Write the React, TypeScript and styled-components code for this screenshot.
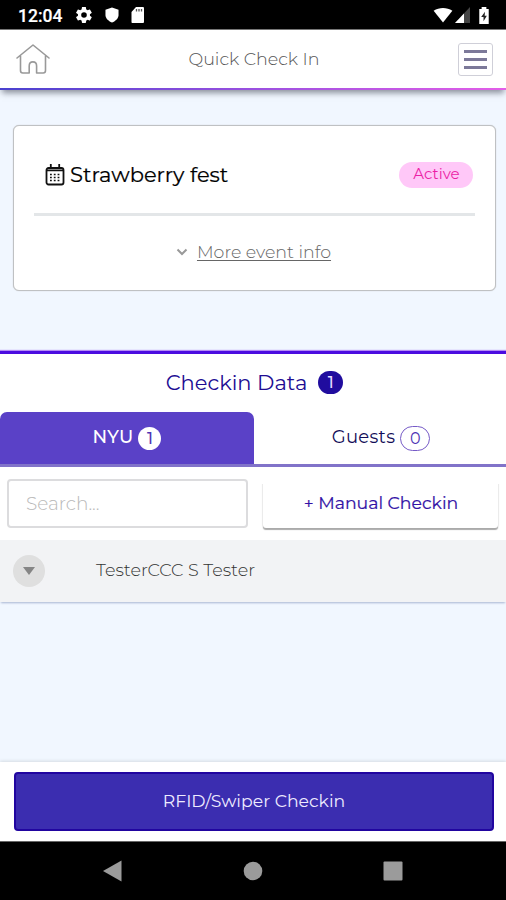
import React from "react";
import styled, { createGlobalStyle } from "styled-components";

const GlobalStyle = createGlobalStyle`
  *, *::before, *::after { box-sizing: border-box; }
  body { margin: 0; background: #f1f7ff; font-family: Montserrat, Inter, sans-serif; overflow: hidden; }
  button, input { font-family: inherit; margin: 0; }
`;

const Screen = styled.div`
  width: 506px;
  height: 900px;
  display: flex;
  flex-direction: column;
  background: #f1f7ff;
`;

const StatusBar = styled.div`
  height: 30px;
  flex: none;
  display: flex;
  align-items: center;
  padding: 1px 16px 0 18px;
  background: #000;
  border-bottom: 1px solid #777;
  color: #fff;
`;

const Clock = styled.span`
  width: 58px;
  padding-top: 1px;
  font: 500 17.5px/28px Roboto, sans-serif;
  -webkit-text-stroke: 0.2px #fff;
`;

const StatusIcons = styled.div<{ $end?: boolean }>`
  display: flex;
  align-items: center;
  margin-left: ${(p) => (p.$end ? "auto" : "0")};
  gap: ${(p) => (p.$end ? "0" : "12.5px")};
`;

const Header = styled.header`
  height: 60px;
  flex: none;
  display: grid;
  grid-template-columns: 36px 1fr 36px;
  align-items: center;
  padding: 0 13px 2px 15px;
  background: linear-gradient(90deg, #4a41cf, #9a50e0 50%, #e35ee8) bottom / 100% 2px no-repeat, #fff;
  box-shadow: 0 5px 6px -2px rgba(70, 75, 90, 0.6);
`;

const HeaderTitle = styled.h1`
  margin: 0;
  padding-bottom: 2px;
  text-align: center;
  font-size: 17.5px;
  font-weight: 300;
  color: #555;
`;

const MenuButton = styled.button`
  width: 35px;
  height: 33px;
  display: flex;
  flex-direction: column;
  align-items: center;
  justify-content: center;
  gap: 5px;
  padding: 0;
  border: 1px solid #cfcfd8;
  border-radius: 3px;
  justify-self: end;
  background: #fff;
`;

const MenuLine = styled.span`
  width: 23px;
  height: 3px;
  background: #7c7999;
`;

const EventCard = styled.section`
  height: 166px;
  flex: none;
  margin: 35px 10px 60px 13px;
  padding: 0 20px;
  background: #fff;
  border: 1px solid #bfc1c3;
  border-radius: 6px;
  box-shadow: 0 0 1px #bbb;
`;

const EventRow = styled.div`
  height: 90px;
  display: flex;
  align-items: center;
  padding: 10px 2px 0 11px;
  border-bottom: 3px solid #e3e6e8;
`;

const EventName = styled.h2`
  margin: 0 auto 0 5px;
  font-size: 21px;
  font-weight: 400;
  line-height: 26px;
  color: #000;
  -webkit-text-stroke: 0.2px #000;
`;

const StatusTag = styled.span`
  width: 74px;
  height: 26px;
  padding-left: 1px;
  border-radius: 13px;
  background: #ffc8f8;
  color: #ec1fa6;
  font-size: 15px;
  line-height: 24px;
  text-align: center;
`;

const MoreInfo = styled.button`
  width: 100%;
  height: 72px;
  display: flex;
  align-items: center;
  justify-content: center;
  gap: 9px;
  padding: 0 2px 0 0;
  border: 0;
  background: none;
  color: #666;
  font-size: 17.4px;
  font-weight: 300;
`;

const MoreLabel = styled.span`
  padding-bottom: 2px;
  text-decoration: underline;
  text-decoration-skip-ink: none;
  text-underline-offset: 2px;
`;

const CheckinPanel = styled.section`
  flex: none;
  background: #fff;
  border-top: 3px solid #4b0be0;
  box-shadow: 0 -1px 1px #b48cf5;
`;

const PanelTitle = styled.h2`
  height: 58px;
  margin: 0;
  display: flex;
  align-items: center;
  justify-content: center;
  gap: 11px;
  padding: 0 0 1px 3px;
  font-size: 21px;
  font-weight: 400;
  color: #210c93;
`;

const Count = styled.span<{ $kind: "solid" | "light" | "outline" }>`
  width: ${(p) => (p.$kind === "outline" ? "30px" : p.$kind === "solid" ? "25px" : "23px")};
  height: ${(p) => (p.$kind === "outline" ? "25px" : "23px")};
  display: inline-flex;
  align-items: center;
  justify-content: center;
  border-radius: 13px;
  border: ${(p) => (p.$kind === "outline" ? "1px solid #765bc7" : "0")};
  background: ${(p) => (p.$kind === "solid" ? "#200c9e" : "#fff")};
  color: ${(p) => (p.$kind === "solid" ? "#e5dcff" : "#4e35b5")};
  font-size: 16px;
  font-weight: ${(p) => (p.$kind === "outline" ? 400 : 500)};
  letter-spacing: 0;
`;

const Tabs = styled.div`
  height: 55px;
  display: grid;
  grid-template-columns: 254px 1fr;
  border-bottom: 3px solid #8173c9;
`;

const Tab = styled.button<{ $active?: boolean }>`
  display: flex;
  align-items: center;
  justify-content: center;
  gap: 5px;
  padding: ${(p) => (p.$active ? "0" : "0 0 0 2px")};
  border: 0;
  border-radius: 7px 7px 0 0;
  background: ${(p) => (p.$active ? "#5a41c7" : "#fff")};
  color: ${(p) => (p.$active ? "#fff" : "#120d58")};
  font-size: 18px;
  font-weight: ${(p) => (p.$active ? 500 : 400)};
  letter-spacing: 0.3px;
`;

const TabLabel = styled.span`
  padding-bottom: 2px;
`;

const Tools = styled.div`
  height: 73px;
  display: grid;
  grid-template-columns: 241px 235px;
  gap: 15px;
  padding: 12px 8px 12px 7px;
`;

const SearchInput = styled.input`
  height: 49px;
  min-width: 0;
  padding: 0 17px;
  border: 2px solid #dcdcde;
  border-radius: 4px;
  background: #fff;
  font-size: 18.5px;
  font-weight: 300;
  &::placeholder { color: #b8b8b8; opacity: 1; }
`;

const ManualButton = styled.button`
  height: 49px;
  padding: 0 0 2px 1px;
  border: 0;
  border-radius: 3px;
  background: #fff;
  box-shadow: 0 2px 1px #aaa, 0 0 2px #ccc;
  clip-path: inset(5px -4px -4px -4px);
  color: #3212a6;
  font-size: 17.3px;
  font-weight: 400;
  -webkit-text-stroke: 0.2px #3212a6;
`;

const PersonRow = styled.div`
  height: 62px;
  display: flex;
  align-items: center;
  gap: 51px;
  padding-left: 13px;
  background: #f2f3f5;
  box-shadow: 0 2px 2px -1px #a8b5d2;
  font-size: 17.6px;
  font-weight: 300;
  color: #333;
`;

const PersonName = styled.span`
  padding-bottom: 3px;
`;

const ExpandButton = styled.button`
  width: 32px;
  height: 32px;
  display: flex;
  align-items: center;
  justify-content: center;
  padding: 0;
  border: 0;
  border-radius: 50%;
  background: #dfdfdf;
`;

const ActionBar = styled.footer`
  height: 79px;
  flex: none;
  margin-top: auto;
  display: flex;
  padding: 10px 12px 10px 14px;
  background: #fff;
  box-shadow: 0 -1px 3px #d6dce2;
`;

const ActionButton = styled.button`
  flex: 1;
  padding: 0 0 2px;
  border: 2px solid #2105a0;
  border-radius: 4px;
  background: #3b2db0;
  color: #eeebff;
  font-size: 17.3px;
  font-weight: 400;
`;

const NavBar = styled.nav`
  height: 59px;
  flex: none;
  display: flex;
  align-items: center;
  justify-content: center;
  gap: 120px;
  background: #000;
  border-top: 1px solid #666;
`;

const NavIcon = styled.svg`
  width: 20px;
  height: 22px;
  display: block;
  fill: #9b9b9b;
`;

export default function App() {
  return (
    <>
      <GlobalStyle />
      <Screen>
        <StatusBar>
          <Clock>12:04</Clock>
          <StatusIcons>
            <svg width="16" height="16" viewBox="2 2 20 20" fill="#fff">
              <path d="M19.4 13a7.600 7.600 0 0 0 0-2l2.100-1.600c.2-.2.2-.4.1-.6l-2-3.500c-.1-.2-.4-.3-.6-.2l-2.500 1a7.300 7.300 0 0 0-1.700-1l-.4-2.600c0-.3-.2-.5-.5-.5h-4c-.2 0-.4.2-.5.5L9 5.100a8 8 0 0 0-1.700 1l-2.500-1c-.2-.1-.5 0-.6.2l-2 3.500c-.1.2-.1.4.1.6L4.500 11a7.600 7.600 0 0 0 0 2l-2.200 1.600c-.2.2-.2.4-.1.6l2 3.500c.1.2.4.3.6.2l2.500-1a7.300 7.300 0 0 0 1.700 1l.4 2.600c.1.3.3.5.5.5h4c.3 0 .5-.2.5-.5l.4-2.600a8 8 0 0 0 1.700-1l2.500 1c.2.1.5 0 .6-.2l2-3.500c.1-.2.1-.4-.1-.6zM12 15.500a3.500 3.500 0 1 1 0-7 3.500 3.500 0 0 1 0 7z" />
            </svg>
            <svg width="14" height="16" viewBox="0 0 15 16" fill="#fff">
              <path d="M7.500 0 14.500 2.500V8c0 3.500-3 6.500-7 8-4-1.500-7-4.500-7-8V2.500z" />
            </svg>
            <svg width="14" height="16" viewBox="0 0 14 16">
              <path fill="#fff" d="M5 0h6.700c.8 0 1.300.5 1.300 1.300v13.400c0 .8-.5 1.300-1.300 1.300H1.500C.7 16 .5 15.500.5 14.700V5z" />
              <path stroke="#555" strokeWidth="1.300" d="M5.500 2v2.500M8 2v2.500M10.500 2v2.500" />
            </svg>
          </StatusIcons>
          <StatusIcons $end>
            <svg width="20" height="15" viewBox="0 0 20 16" fill="#fff">
              <path d="M0 3C6-1 14-1 20 3L10 15.500z" />
            </svg>
            <svg width="25" height="16" viewBox="0 0 25 16">
              <path d="M2 16 17 0v16z" fill="#444" />
              <path d="M2 16 11 6.400V16z" fill="#fff" />
            </svg>
            <svg width="12" height="17" viewBox="0 0 12 18">
              <path d="M3.500 2V0h5v2H11v16H1V2z" fill="#fff" />
              <path d="M7 5 3 10.500h2.500V15L9 9.300H6.700z" fill="#222" />
            </svg>
          </StatusIcons>
        </StatusBar>

        <Header>
          <svg width="36" height="32" viewBox="0 0 36 32" fill="none" stroke="#999" strokeWidth="1.600" strokeLinecap="round" strokeLinejoin="round">
            <path d="M2 15 18 2l16 13M5.500 13v14.500c0 1.500.8 2.500 2.300 2.500h6.400V23c0-5.500 7.400-5.500 7.400 0v7h6.600c1.500 0 2.300-1 2.300-2.500V13" />
          </svg>
          <HeaderTitle>Quick Check In</HeaderTitle>
          <MenuButton aria-label="Menu">
            <MenuLine />
            <MenuLine />
            <MenuLine />
          </MenuButton>
        </Header>

        <EventCard>
          <EventRow>
            <svg width="20" height="22" viewBox="0 0 20 22" fill="none" stroke="#111" strokeWidth="1.800">
              <rect x="1.500" y="4" width="17" height="16.500" rx="2" />
              <path d="M2 6.300h16M5.800 0v5M14.200 0v5" />
              <path d="M5 10.500h11M5 13.500h11M5 16.500h11" strokeDasharray="1.800 2" strokeWidth="1.500" />
            </svg>
            <EventName>Strawberry fest</EventName>
            <StatusTag>Active</StatusTag>
          </EventRow>
          <MoreInfo>
            <svg width="12" height="8" viewBox="0 0 12 8" fill="none" stroke="#999" strokeWidth="2">
              <path d="m1.500 1.500 4.500 4.500 4.500-4.500" />
            </svg>
            <MoreLabel>More event info</MoreLabel>
          </MoreInfo>
        </EventCard>

        <CheckinPanel>
          <PanelTitle>
            Checkin Data <Count $kind="solid">1</Count>
          </PanelTitle>
          <Tabs>
            <Tab $active>
              <TabLabel>NYU</TabLabel>
              <Count $kind="light">1</Count>
            </Tab>
            <Tab>
              <TabLabel>Guests</TabLabel>
              <Count $kind="outline">0</Count>
            </Tab>
          </Tabs>
          <Tools>
            <SearchInput placeholder="Search..." />
            <ManualButton>+ Manual Checkin</ManualButton>
          </Tools>
          <PersonRow>
            <ExpandButton aria-label="Expand">
              <svg width="12" height="8" viewBox="0 0 12 8" fill="#858585">
                <path d="M0 0h12L6 8z" />
              </svg>
            </ExpandButton>
            <PersonName>TesterCCC S Tester</PersonName>
          </PersonRow>
        </CheckinPanel>

        <ActionBar>
          <ActionButton>RFID/Swiper Checkin</ActionButton>
        </ActionBar>

        <NavBar>
          <NavIcon viewBox="0 0 20 22"><path d="M0 11 18.500 0.500v21z" /></NavIcon>
          <NavIcon viewBox="0 0 20 22"><circle cx="10" cy="11" r="9.300" /></NavIcon>
          <NavIcon viewBox="0 0 20 22"><rect x="0.500" y="1.500" width="19" height="19" rx="1" /></NavIcon>
        </NavBar>
      </Screen>
    </>
  );
}
